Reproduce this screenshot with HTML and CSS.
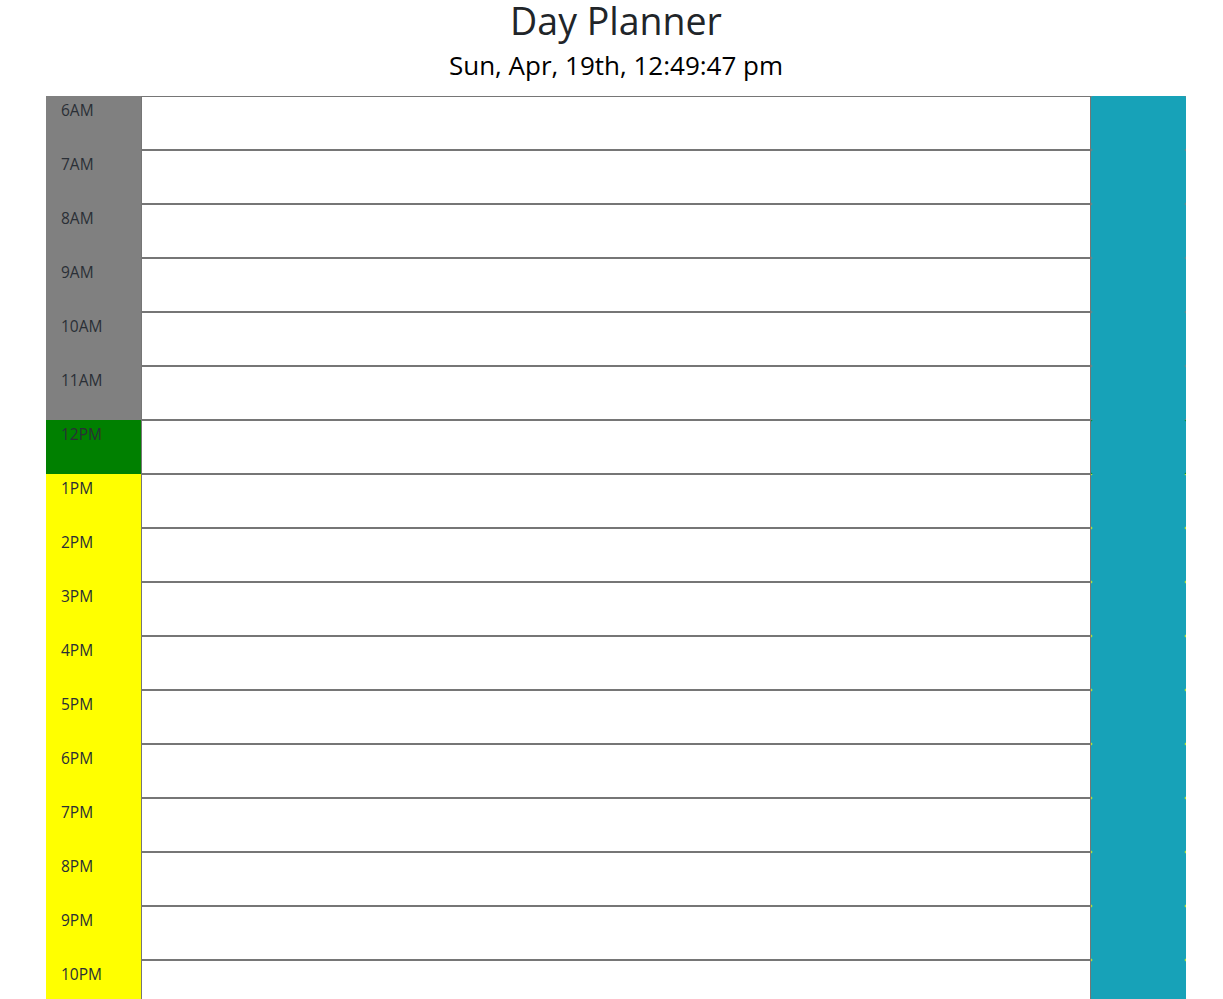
FILE: index.html
```html
<!DOCTYPE html>
<html lang="en">
<head>
<meta charset="utf-8">
<title>Day Planner</title>
<link rel="stylesheet" href="styles.css">
</head>
<body>
<header class="page-header">
  <h1 class="title">Day Planner</h1>
  <p class="current-day">Sun, Apr, 19th, 12:49:47 pm</p>
</header>
<main class="planner">
  <div class="time-block past"><div class="hour">6AM</div><textarea class="description"></textarea><button class="save-btn" aria-label="save"></button></div>
  <div class="time-block past"><div class="hour">7AM</div><textarea class="description"></textarea><button class="save-btn" aria-label="save"></button></div>
  <div class="time-block past"><div class="hour">8AM</div><textarea class="description"></textarea><button class="save-btn" aria-label="save"></button></div>
  <div class="time-block past"><div class="hour">9AM</div><textarea class="description"></textarea><button class="save-btn" aria-label="save"></button></div>
  <div class="time-block past"><div class="hour">10AM</div><textarea class="description"></textarea><button class="save-btn" aria-label="save"></button></div>
  <div class="time-block past"><div class="hour">11AM</div><textarea class="description"></textarea><button class="save-btn" aria-label="save"></button></div>
  <div class="time-block present"><div class="hour">12PM</div><textarea class="description"></textarea><button class="save-btn" aria-label="save"></button></div>
  <div class="time-block future"><div class="hour">1PM</div><textarea class="description"></textarea><button class="save-btn" aria-label="save"></button></div>
  <div class="time-block future"><div class="hour">2PM</div><textarea class="description"></textarea><button class="save-btn" aria-label="save"></button></div>
  <div class="time-block future"><div class="hour">3PM</div><textarea class="description"></textarea><button class="save-btn" aria-label="save"></button></div>
  <div class="time-block future"><div class="hour">4PM</div><textarea class="description"></textarea><button class="save-btn" aria-label="save"></button></div>
  <div class="time-block future"><div class="hour">5PM</div><textarea class="description"></textarea><button class="save-btn" aria-label="save"></button></div>
  <div class="time-block future"><div class="hour">6PM</div><textarea class="description"></textarea><button class="save-btn" aria-label="save"></button></div>
  <div class="time-block future"><div class="hour">7PM</div><textarea class="description"></textarea><button class="save-btn" aria-label="save"></button></div>
  <div class="time-block future"><div class="hour">8PM</div><textarea class="description"></textarea><button class="save-btn" aria-label="save"></button></div>
  <div class="time-block future"><div class="hour">9PM</div><textarea class="description"></textarea><button class="save-btn" aria-label="save"></button></div>
  <div class="time-block future"><div class="hour">10PM</div><textarea class="description"></textarea><button class="save-btn" aria-label="save"></button></div>
</main>
</body>
</html>
```

FILE: styles.css
```css
html, body {
  margin: 0;
  padding: 0;
}

body {
  font-family: "Open Sans", "Noto Sans", sans-serif;
  color: #212529;
  background: #ffffff;
}

.page-header {
  box-sizing: border-box;
  width: 1140px;
  margin-left: 46px;
  text-align: center;
  height: 96px;
}

.title {
  margin: 0;
  font-size: 37.5px;
  font-weight: 400;
  line-height: 42px;
  color: #212529;
}

.current-day {
  margin: 5px 0 0;
  font-size: 26px;
  line-height: 36px;
  color: #000000;
}

.planner {
  width: 1140px;
  margin-left: 46px;
  display: flex;
  flex-direction: column;
}

.time-block {
  display: grid;
  grid-template-columns: 95px 950px 95px;
  height: 54px;
}

.past { background: #808080; }
.present { background: #008000; }
.future { background: #ffff00; }

.hour {
  padding: 4px 0 0 15px;
  font-size: 15.5px;
  line-height: 21px;
  color: #2a2f36;
}

.description {
  box-sizing: border-box;
  margin: 0;
  width: 950px;
  height: 54px;
  border: 1px solid #767676;
  background: #ffffff;
  resize: none;
  padding: 2px;
  font-family: inherit;
}

.save-btn {
  margin: 0;
  padding: 0;
  border: none;
  border-radius: 2px;
  background: #17a2b8;
  height: 54px;
}
```
